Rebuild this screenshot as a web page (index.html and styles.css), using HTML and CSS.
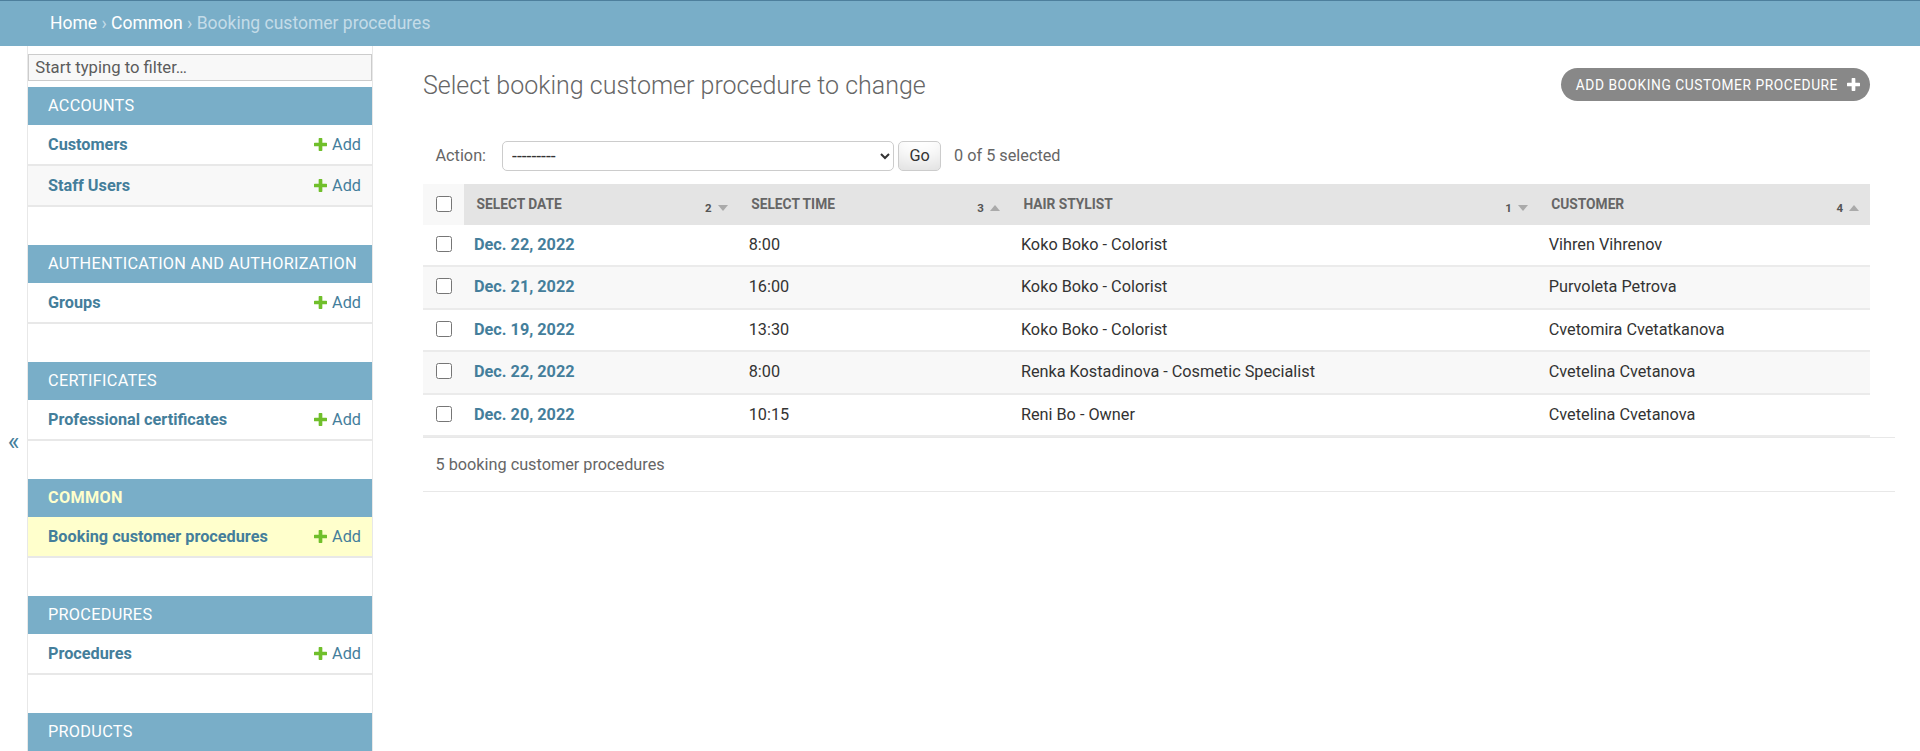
FILE: index.html
```html
<!DOCTYPE html>
<html lang="en">
<head>
<meta charset="utf-8">
<title>Select booking customer procedure to change | Django site admin</title>
<link rel="stylesheet" href="styles.css">
</head>
<body>
<div class="breadcrumbs">
  <a href="#">Home</a> <span class="sep">›</span> <a href="#">Common</a> <span class="sep">›</span> Booking customer procedures
</div>
<div class="main">
  <div class="toggle-nav-sidebar"><span class="toggle-glyph">«</span></div>
  <nav class="nav-sidebar">
    <input class="nav-filter" type="text" placeholder="Start typing to filter…">

    <div class="module">
      <div class="caption">Accounts</div>
      <div class="model-row"><a class="model" href="#">Customers</a><a class="addlink" href="#"><svg class="plus" viewBox="0 0 12 12"><path d="M4.3 0.6q0-0.6 0.6-0.6h2.2q0.6 0 0.6 0.6v3.7h3.7q0.6 0 0.6 0.6v2.2q0 0.6-0.6 0.6h-3.7v3.7q0 0.6-0.6 0.6h-2.2q-0.6 0-0.6-0.6v-3.7h-3.7q-0.6 0-0.6-0.6v-2.2q0-0.6 0.6-0.6h3.7z"/></svg>Add</a></div>
      <div class="model-row alt"><a class="model" href="#">Staff Users</a><a class="addlink" href="#"><svg class="plus" viewBox="0 0 12 12"><path d="M4.3 0.6q0-0.6 0.6-0.6h2.2q0.6 0 0.6 0.6v3.7h3.7q0.6 0 0.6 0.6v2.2q0 0.6-0.6 0.6h-3.7v3.7q0 0.6-0.6 0.6h-2.2q-0.6 0-0.6-0.6v-3.7h-3.7q-0.6 0-0.6-0.6v-2.2q0-0.6 0.6-0.6h3.7z"/></svg>Add</a></div>
    </div>

    <div class="module">
      <div class="caption">Authentication and Authorization</div>
      <div class="model-row"><a class="model" href="#">Groups</a><a class="addlink" href="#"><svg class="plus" viewBox="0 0 12 12"><path d="M4.3 0.6q0-0.6 0.6-0.6h2.2q0.6 0 0.6 0.6v3.7h3.7q0.6 0 0.6 0.6v2.2q0 0.6-0.6 0.6h-3.7v3.7q0 0.6-0.6 0.6h-2.2q-0.6 0-0.6-0.6v-3.7h-3.7q-0.6 0-0.6-0.6v-2.2q0-0.6 0.6-0.6h3.7z"/></svg>Add</a></div>
    </div>

    <div class="module">
      <div class="caption">Certificates</div>
      <div class="model-row"><a class="model" href="#">Professional certificates</a><a class="addlink" href="#"><svg class="plus" viewBox="0 0 12 12"><path d="M4.3 0.6q0-0.6 0.6-0.6h2.2q0.6 0 0.6 0.6v3.7h3.7q0.6 0 0.6 0.6v2.2q0 0.6-0.6 0.6h-3.7v3.7q0 0.6-0.6 0.6h-2.2q-0.6 0-0.6-0.6v-3.7h-3.7q-0.6 0-0.6-0.6v-2.2q0-0.6 0.6-0.6h3.7z"/></svg>Add</a></div>
    </div>

    <div class="module">
      <div class="caption current-app">Common</div>
      <div class="model-row current"><a class="model" href="#">Booking customer procedures</a><a class="addlink" href="#"><svg class="plus" viewBox="0 0 12 12"><path d="M4.3 0.6q0-0.6 0.6-0.6h2.2q0.6 0 0.6 0.6v3.7h3.7q0.6 0 0.6 0.6v2.2q0 0.6-0.6 0.6h-3.7v3.7q0 0.6-0.6 0.6h-2.2q-0.6 0-0.6-0.6v-3.7h-3.7q-0.6 0-0.6-0.6v-2.2q0-0.6 0.6-0.6h3.7z"/></svg>Add</a></div>
    </div>

    <div class="module">
      <div class="caption">Procedures</div>
      <div class="model-row"><a class="model" href="#">Procedures</a><a class="addlink" href="#"><svg class="plus" viewBox="0 0 12 12"><path d="M4.3 0.6q0-0.6 0.6-0.6h2.2q0.6 0 0.6 0.6v3.7h3.7q0.6 0 0.6 0.6v2.2q0 0.6-0.6 0.6h-3.7v3.7q0 0.6-0.6 0.6h-2.2q-0.6 0-0.6-0.6v-3.7h-3.7q-0.6 0-0.6-0.6v-2.2q0-0.6 0.6-0.6h3.7z"/></svg>Add</a></div>
    </div>

    <div class="module">
      <div class="caption">Products</div>
    </div>
  </nav>

  <div class="content">
    <div class="content-head">
      <h1>Select booking customer procedure to change</h1>
      <a class="object-tool" href="#">Add booking customer procedure<svg class="tool-plus" viewBox="0 0 12 12"><path d="M4.3 0.6q0-0.6 0.6-0.6h2.2q0.6 0 0.6 0.6v3.7h3.7q0.6 0 0.6 0.6v2.2q0 0.6-0.6 0.6h-3.7v3.7q0 0.6-0.6 0.6h-2.2q-0.6 0-0.6-0.6v-3.7h-3.7q-0.6 0-0.6-0.6v-2.2q0-0.6 0.6-0.6h3.7z"/></svg></a>
    </div>

    <div class="actions">
      <label class="action-label">Action:</label>
      <select class="action-select">
        <option>---------</option>
        <option>Delete selected booking customer procedures</option>
      </select>
      <button class="go-button" type="button">Go</button>
      <span class="action-counter">0 of 5 selected</span>
    </div>

    <table class="results">
      <colgroup>
        <col class="c-check"><col class="c-date"><col class="c-time"><col class="c-stylist"><col class="c-customer">
      </colgroup>
      <thead>
        <tr>
          <th class="check-col"><input class="cb" type="checkbox"></th>
          <th class="sorted"><div class="th-inner"><span class="th-text">Select date</span><span class="sortoptions"><span class="sortpriority">2</span><svg class="sort-arrow" viewBox="0 0 10 6"><polygon points="0,0 10,0 5,6"/></svg></span></div></th>
          <th class="sorted"><div class="th-inner"><span class="th-text">Select time</span><span class="sortoptions"><span class="sortpriority">3</span><svg class="sort-arrow" viewBox="0 0 10 6"><polygon points="0,6 10,6 5,0"/></svg></span></div></th>
          <th class="sorted"><div class="th-inner"><span class="th-text">Hair stylist</span><span class="sortoptions"><span class="sortpriority">1</span><svg class="sort-arrow" viewBox="0 0 10 6"><polygon points="0,0 10,0 5,6"/></svg></span></div></th>
          <th class="sorted"><div class="th-inner"><span class="th-text">Customer</span><span class="sortoptions"><span class="sortpriority">4</span><svg class="sort-arrow" viewBox="0 0 10 6"><polygon points="0,6 10,6 5,0"/></svg></span></div></th>
        </tr>
      </thead>
      <tbody>
        <tr>
          <td class="check-cell"><input class="cb" type="checkbox"></td>
          <th class="field"><a href="#">Dec. 22, 2022</a></th>
          <td>8:00</td>
          <td>Koko Boko - Colorist</td>
          <td>Vihren Vihrenov</td>
        </tr>
        <tr class="alt">
          <td class="check-cell"><input class="cb" type="checkbox"></td>
          <th class="field"><a href="#">Dec. 21, 2022</a></th>
          <td>16:00</td>
          <td>Koko Boko - Colorist</td>
          <td>Purvoleta Petrova</td>
        </tr>
        <tr>
          <td class="check-cell"><input class="cb" type="checkbox"></td>
          <th class="field"><a href="#">Dec. 19, 2022</a></th>
          <td>13:30</td>
          <td>Koko Boko - Colorist</td>
          <td>Cvetomira Cvetatkanova</td>
        </tr>
        <tr class="alt">
          <td class="check-cell"><input class="cb" type="checkbox"></td>
          <th class="field"><a href="#">Dec. 22, 2022</a></th>
          <td>8:00</td>
          <td>Renka Kostadinova - Cosmetic Specialist</td>
          <td>Cvetelina Cvetanova</td>
        </tr>
        <tr>
          <td class="check-cell"><input class="cb" type="checkbox"></td>
          <th class="field"><a href="#">Dec. 20, 2022</a></th>
          <td>10:15</td>
          <td>Reni Bo - Owner</td>
          <td>Cvetelina Cvetanova</td>
        </tr>
      </tbody>
    </table>
    <p class="paginator">5 booking customer procedures</p>
  </div>
</div>
</body>
</html>
```

FILE: styles.css
```css
html, body {
  margin: 0;
  padding: 0;
}
body {
  font-family: Roboto, "Liberation Sans", sans-serif;
  font-size: 17.5px;
  color: #333;
  background: #fff;
  height: 751px;
  overflow: hidden;
}
a {
  text-decoration: none;
  color: #447e9b;
}

/* breadcrumbs */
.breadcrumbs {
  background: #79aec8;
  border-top: 1px solid #4d7f9c;
  padding: 12px 50px 12.5px;
  line-height: 20.5px;
  font-size: 17.5px;
  color: #c4dce8;
}
.breadcrumbs a {
  color: #fff;
}

/* main layout */
.main {
  display: flex;
  height: 705px;
}
.toggle-nav-sidebar {
  flex: 0 0 28px;
  border-right: 1px solid #e8e8e8;
  display: flex;
  justify-content: center;
  align-items: flex-start;
  padding-top: 381px;
  box-sizing: border-box;
  color: #447e9b;
  font-size: 25px;
  line-height: 29px;
}

/* sidebar */
.nav-sidebar {
  flex: 0 0 344px;
  border-right: 1px solid #e8e8e8;
  overflow: hidden;
}
.nav-filter {
  display: block;
  width: 100%;
  box-sizing: border-box;
  margin: 8px 0 6.5px;
  padding: 2.5px 6.25px;
  height: 26.5px;
  border: 1px solid #ccc;
  background: #f8f8f8;
  color: #333;
  font-family: Roboto, "Liberation Sans", sans-serif;
  font-size: 16.67px;
  line-height: 19.5px;
  outline: none;
}
.nav-filter::placeholder {
  color: #5c5c5c;
}
.module {
  margin-bottom: 38.25px;
}
.caption {
  background: #79aec8;
  color: #fff;
  padding: 10px 20px;
  line-height: 17.5px;
  font-size: 16.25px;
  text-transform: uppercase;
  letter-spacing: 0.3px;
  white-space: nowrap;
}
.caption.current-app {
  color: #ffc;
  font-weight: 700;
}
.model-row {
  display: flex;
  justify-content: space-between;
  align-items: center;
  padding: 10px 11px 10px 20px;
  line-height: 19.25px;
  font-size: 16.25px;
  border-bottom: 2px solid #e8e8e8;
}
.model-row.alt {
  background: #f8f8f8;
}
.model-row.current {
  background: #ffc;
}
.model {
  font-weight: 700;
}
.addlink {
  display: inline-flex;
  align-items: center;
  gap: 5px;
}
.plus {
  width: 13px;
  height: 13px;
  fill: #70bf2b;
}

/* content */
.content {
  flex: 1 1 auto;
  min-width: 0;
  padding: 25px 50px;
}
.content-head {
  display: flex;
  justify-content: space-between;
  align-items: flex-start;
  margin-bottom: 25px;
}
h1 {
  margin: 0;
  font-weight: 300;
  font-size: 25px;
  line-height: 30px;
  color: #666;
}
.object-tool {
  display: flex;
  align-items: center;
  margin-top: -3px;
  height: 33px;
  padding: 0 10px 0 15px;
  background: #888;
  color: #fff;
  border-radius: 16.5px;
  font-size: 13.75px;
  text-transform: uppercase;
  letter-spacing: 0.55px;
}
.tool-plus {
  width: 13px;
  height: 13px;
  fill: #fff;
  margin-left: 9px;
}

/* actions */
.actions {
  display: flex;
  align-items: center;
  padding: 14.5px 12.5px 13px;
  height: 30px;
  color: #666;
}
.action-label {
  font-size: 16.25px;
}
.action-select {
  margin-left: 16px;
  width: 392px;
  height: 30px;
  border: 1px solid #ccc;
  border-radius: 5px;
  background: #fff;
  color: #333;
  padding: 0 0 0 5px;
  font-family: Roboto, "Liberation Sans", sans-serif;
  font-size: 17.5px;
}
.go-button {
  margin-left: 4px;
  width: 43px;
  height: 30px;
  border: 1px solid #ccc;
  border-radius: 5px;
  background: #fff;
  box-shadow: 0 -18px 25px -12px rgba(0, 0, 0, 0.15) inset;
  color: #333;
  font-family: Roboto, "Liberation Sans", sans-serif;
  font-size: 16.25px;
  padding: 0;
}
.action-counter {
  margin-left: 13px;
  font-size: 16.25px;
}

/* results table */
.results {
  width: 100%;
  table-layout: fixed;
  border-collapse: collapse;
  font-size: 16.25px;
}
.c-check { width: 41px; }
.c-date { width: 274.5px; }
.c-time { width: 272px; }
.c-stylist { width: 527.5px; }
.c-customer { width: 331px; }

.results thead th {
  padding: 0;
  height: 41px;
  box-sizing: border-box;
  text-align: left;
  vertical-align: middle;
  color: #666;
  font-size: 13.75px;
  font-weight: 700;
  text-transform: uppercase;
  white-space: nowrap;
}
.results thead th.check-col {
  background: #f8f8f8;
  text-align: center;
}
.results thead th.sorted {
  background: #e4e4e4;
}
.th-inner {
  display: flex;
  justify-content: space-between;
  align-items: center;
  padding: 0 11px 0 12.5px;
}
.sortoptions {
  display: flex;
  align-items: center;
  gap: 6px;
  padding-top: 7px;
}
.sortpriority {
  font-size: 11.5px;
  color: #555;
}
.sort-arrow {
  width: 10px;
  height: 6px;
  fill: #aaa;
}
.cb {
  width: 16px;
  height: 16px;
  margin: 0;
  vertical-align: top;
}
.results tbody td,
.results tbody th {
  padding: 10px;
  line-height: 20.5px;
  border-bottom: 2px solid #ebebeb;
  vertical-align: top;
  text-align: left;
  font-weight: 400;
  color: #333;
}
.results tbody tr.alt td,
.results tbody tr.alt th {
  background: #f8f8f8;
}
.results tbody td.check-cell {
  padding: 11px 0 0;
  text-align: center;
}
.results tbody th.field a {
  font-weight: 700;
}

/* paginator */
.paginator {
  margin: 0;
  width: 100%;
  padding: 12.5px;
  line-height: 27.5px;
  font-size: 16.25px;
  color: #666;
  border-top: 1px solid #e8e8e8;
  border-bottom: 1px solid #e8e8e8;
}
```
